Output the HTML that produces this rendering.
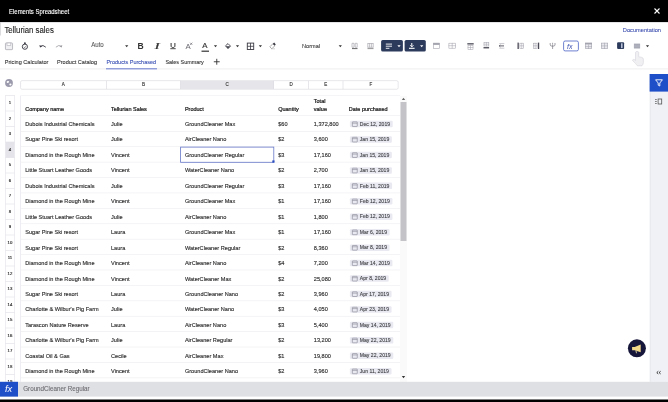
<!DOCTYPE html>
<html><head><meta charset="utf-8"><style>
html,body{margin:0;padding:0;width:668px;height:402px;overflow:hidden;background:#fff}
svg{display:block;will-change:transform}
</style></head><body>
<svg width="668" height="402" viewBox="0 0 668 402" font-family="'Liberation Sans', sans-serif">
<rect x="0.00" y="0.00" width="668.00" height="22.00" fill="#000" />
<text x="9.10" y="13.60" font-size="6.70" fill="#fff" textLength="60.00" lengthAdjust="spacingAndGlyphs" stroke="#fff" stroke-width="0.12">Elements Spreadsheet</text>
<g transform="translate(653.50,7.50)"><path d="M1 1L6 6M6 1L1 6" stroke="#fff" stroke-width="1.1"/></g>
<rect x="0.00" y="22.00" width="668.00" height="0.70" fill="#d8d8dc" />
<rect x="0.00" y="22.00" width="0.90" height="13.50" fill="#d8d8dc" />
<text x="4.40" y="33.20" font-size="8.90" fill="#222" textLength="49.40" lengthAdjust="spacingAndGlyphs" stroke="#222" stroke-width="0.12">Tellurian sales</text>
<text x="622.80" y="31.60" font-size="6.10" fill="#3a4cae" textLength="38.20" lengthAdjust="spacingAndGlyphs" stroke="#3a4cae" stroke-width="0.08">Documentation</text>
<g transform="translate(5.00,42.50)"><rect x="0.45" y="0.45" width="7.1" height="6.7" rx="0.6" fill="#f0f0f3" stroke="#b4b4bc" stroke-width="0.9"/><rect x="2" y="0.5" width="3.8" height="2.4" fill="#fff" stroke="#b0b0b8" stroke-width="0.6"/></g>
<g transform="translate(21.50,42.30)"><circle cx="3.4" cy="4.4" r="2.6" fill="none" stroke="#3a3a44" stroke-width="0.95"/><circle cx="3.4" cy="1.0" r="0.95" fill="#3a3a44"/><path d="M2.3 4.6L3.2 5.4L4.6 3.8" fill="none" stroke="#3a3a44" stroke-width="0.6"/></g>
<g transform="translate(39.20,44.20)"><path d="M1.2 2.0Q3.8 0.2 6.6 3.0" fill="none" stroke="#3a3a44" stroke-width="0.9"/><path d="M0.2 0.8L0.8 3.2L3.0 2.4Z" fill="#3a3a44"/></g>
<g transform="translate(55.50,44.20)"><path d="M5.8 2.0Q3.2 0.2 0.4 3.0" fill="none" stroke="#9a9aa0" stroke-width="0.8"/><path d="M6.8 0.8L6.2 3.2L4.0 2.4Z" fill="#9a9aa0"/></g>
<text x="91.20" y="47.40" font-size="6.60" fill="#555" textLength="12.60" lengthAdjust="spacingAndGlyphs" stroke="#555" stroke-width="0.08">Auto</text>
<g transform="translate(125.10,45.20)"><path d="M0 0H3.2L1.6 2Z" fill="#333"/></g>
<text x="137.60" y="48.80" font-size="8.40" fill="#333" font-weight="bold" textLength="6.20" lengthAdjust="spacingAndGlyphs">B</text>
<text x="154.40" y="48.80" font-size="8.20" fill="#333" textLength="5.20" lengthAdjust="spacingAndGlyphs" font-family="Liberation Serif" font-style="italic" stroke="#333" stroke-width="0.2">I</text>
<g transform="translate(170.00,42.80)"><path d="M1.1 0.2V3.2C1.1 5.2 4.9 5.2 4.9 3.2V0.2" fill="none" stroke="#333" stroke-width="1"/><path d="M0.3 5.9H5.7" stroke="#333" stroke-width="0.9"/></g>
<text x="185.60" y="48.60" font-size="7.60" fill="#6a6a72" textLength="5.20" lengthAdjust="spacingAndGlyphs">A</text>
<g transform="translate(189.80,42.40)"><path d="M0.3 0.3L2.5 2.5M2.5 0.3L0.3 2.5" stroke="#6a6a72" stroke-width="0.7"/></g>
<text x="202.30" y="47.80" font-size="7.40" fill="#333" textLength="5.20" lengthAdjust="spacingAndGlyphs" stroke="#333" stroke-width="0.15">A</text>
<rect x="201.50" y="50.60" width="7.50" height="1.20" fill="#333" />
<g transform="translate(213.90,45.20)"><path d="M0 0H3.2L1.6 2Z" fill="#333"/></g>
<g transform="translate(224.50,42.80)"><path d="M1 3L3.5 0.8L6 3.3L3.5 5.8Z" fill="none" stroke="#3a3a44" stroke-width="0.9"/><path d="M1.5 3.4H5.6L3.5 5.6Z" fill="#3a3a44"/></g>
<g transform="translate(235.90,45.20)"><path d="M0 0H3.2L1.6 2Z" fill="#333"/></g>
<g transform="translate(246.80,42.60)"><rect x="0.5" y="0.5" width="6.4" height="6.4" fill="none" stroke="#3a3a44" stroke-width="0.9"/><path d="M3.7 0.5V6.9M0.5 3.7H6.9" stroke="#3a3a44" stroke-width="0.8"/></g>
<g transform="translate(258.80,45.20)"><path d="M0 0H3.2L1.6 2Z" fill="#333"/></g>
<g transform="translate(269.00,42.80)"><path d="M0.8 4L3.8 1L5.8 3L2.8 6Z" fill="none" stroke="#888" stroke-width="0.7"/><path d="M3.8 1L5.2 -0.2L6.8 1.6L5.5 2.8Z" fill="#3a3a44"/><path d="M2 6H6" stroke="#aaa" stroke-width="0.5"/></g>
<text x="302.00" y="47.50" font-size="6.00" fill="#3a3a3a" textLength="18.00" lengthAdjust="spacingAndGlyphs" stroke="#3a3a3a" stroke-width="0.1">Normal</text>
<g transform="translate(338.70,45.20)"><path d="M0 0H3.2L1.6 2Z" fill="#333"/></g>
<g transform="translate(351.00,42.30)"><path d="M1 1V5M3 1V5M1 1H3M1 5H3M4.2 1H6.2V5H4.2Z" fill="none" stroke="#9a9aa2" stroke-width="0.6"/><path d="M1 6.3H6.5" stroke="#555" stroke-width="0.9"/></g>
<g transform="translate(367.00,42.30)"><path d="M0.8 1.2V5M2.6 1.2V5M4.4 1.2V5M6.2 1.2V5M0.5 1.2H6.5M0.5 5H6.5" fill="none" stroke="#9a9aa2" stroke-width="0.6"/><path d="M0.5 6.3H6.5" stroke="#666" stroke-width="0.7"/></g>
<rect x="381.10" y="40.00" width="21.80" height="11.60" fill="#2c3b5c" rx="1.6"/>
<rect x="404.60" y="40.00" width="21.20" height="11.60" fill="#2c3b5c" rx="1.6"/>
<g transform="translate(385.80,43.60)"><path d="M0 0.5H6.2M0 2.6H6.2M0 4.7H3.6" stroke="#fff" stroke-width="0.9"/></g>
<g transform="translate(397.40,45.20)"><path d="M0 0H3.2L1.6 2Z" fill="#fff"/></g>
<g transform="translate(409.00,43.00)"><path d="M2.8 0V3.6M1.2 2.3L2.8 3.9L4.4 2.3" fill="none" stroke="#fff" stroke-width="1"/><path d="M0 5.3H5.6" stroke="#fff" stroke-width="1.1"/></g>
<g transform="translate(420.10,45.20)"><path d="M0 0H3.2L1.6 2Z" fill="#fff"/></g>
<g transform="translate(433.20,42.90)"><rect x="0.3" y="0.3" width="5.8" height="5.2" fill="none" stroke="#a4a4ae" stroke-width="0.6"/><rect x="0" y="0" width="6.4" height="2" fill="#a4a4ae"/></g>
<g transform="translate(448.60,42.90)"><rect x="0.30" y="0.30" width="6.60" height="5.00" fill="none" stroke="#a4a4ae" stroke-width="0.55"/><path d="M0.00 2.80H7.20M3.60 0.00V5.60" stroke="#a4a4ae" stroke-width="0.55"/></g>
<g transform="translate(467.30,43.20)"><rect x="0" y="0" width="6.4" height="1.3" fill="#4a4a56"/><rect x="0.70" y="2.50" width="5.00" height="3.60" fill="none" stroke="#a4a4ae" stroke-width="0.55"/><path d="M0.40 4.30H6.00M3.20 2.20V6.40" stroke="#a4a4ae" stroke-width="0.55"/></g>
<g transform="translate(483.50,42.10)"><rect x="0.50" y="0.30" width="4.80" height="3.60" fill="none" stroke="#a4a4ae" stroke-width="0.55"/><path d="M0.20 2.10H5.60M2.90 0.00V4.20" stroke="#a4a4ae" stroke-width="0.55"/><rect x="0" y="5" width="5.6" height="1.3" fill="#4a4a56"/></g>
<g transform="translate(498.80,42.60)"><path d="M0.5 1H5.5M0.5 5.6H5.5" stroke="#a4a4ae" stroke-width="0.6"/><path d="M0.3 3.3H5.2" stroke="#4a4a56" stroke-width="0.9"/><path d="M1.6 2.2L0.4 3.3L1.6 4.4" fill="none" stroke="#4a4a56" stroke-width="0.6"/></g>
<g transform="translate(517.50,42.60)"><rect x="0" y="0" width="1.3" height="6.4" fill="#4a4a56"/><rect x="2.40" y="0.60" width="3.70" height="5.20" fill="none" stroke="#a4a4ae" stroke-width="0.55"/><path d="M2.10 3.20H6.40M4.25 0.30V6.10" stroke="#a4a4ae" stroke-width="0.55"/></g>
<g transform="translate(533.00,42.60)"><rect x="0.30" y="0.60" width="3.70" height="5.20" fill="none" stroke="#a4a4ae" stroke-width="0.55"/><path d="M0.00 3.20H4.30M2.15 0.30V6.10" stroke="#a4a4ae" stroke-width="0.55"/><rect x="4.9" y="0" width="1.3" height="6.4" fill="#4a4a56"/></g>
<g transform="translate(549.00,42.40)"><path d="M3.6 2.2V6.6M1.2 0.6V2.6Q1.2 3.8 3.6 3.8Q6 3.8 6 2.6V0.6M3.6 0.4V2" fill="none" stroke="#7a7a84" stroke-width="0.7"/></g>
<rect x="563.60" y="41.00" width="14.80" height="9.90" fill="#fff" rx="1.5" stroke="#4a62c4" stroke-width="0.8"/>
<text x="567.00" y="49.00" font-size="7.00" fill="#3a50b0" font-style="italic">fx</text>
<g transform="translate(585.00,42.80)"><rect x="0.3" y="0.3" width="6.4" height="5.6" fill="#e8e8ee" stroke="#a4a4ae" stroke-width="0.6"/><rect x="0" y="0" width="7" height="1.6" fill="#a4a4ae"/><path d="M0 3.8H7M3.5 1.6V6.2" stroke="#a4a4ae" stroke-width="0.55"/></g>
<g transform="translate(601.00,42.80)"><rect x="0.3" y="0.3" width="6.4" height="5.6" fill="#e8e8ee" stroke="#a4a4ae" stroke-width="0.6"/><path d="M3.5 0V6.2M0 3.1H7" stroke="#a4a4ae" stroke-width="0.55"/></g>
<g transform="translate(617.10,42.30)"><rect x="0" y="0" width="7" height="6.8" rx="1" fill="#2c3b5c"/><rect x="3.9" y="1" width="1.6" height="4.8" fill="#b8c0d8"/></g>
<g transform="translate(633.90,43.60)"><rect x="0" y="0" width="6.2" height="4.9" fill="#a8aab6"/><path d="M0 2.45H6.2" stroke="#c8cad4" stroke-width="0.4"/></g>
<g transform="translate(645.90,45.20)"><path d="M0 0H3.2L1.6 2Z" fill="#333"/></g>
<text x="4.80" y="63.80" font-size="5.70" fill="#333" textLength="43.60" lengthAdjust="spacingAndGlyphs" stroke="#333" stroke-width="0.1">Pricing Calculator</text>
<text x="57.00" y="63.80" font-size="5.70" fill="#333" textLength="40.00" lengthAdjust="spacingAndGlyphs" stroke="#333" stroke-width="0.1">Product Catalog</text>
<text x="106.40" y="63.80" font-size="5.70" fill="#3a50b4" textLength="49.80" lengthAdjust="spacingAndGlyphs" stroke="#3a50b4" stroke-width="0.1">Products Purchased</text>
<text x="165.40" y="63.80" font-size="5.70" fill="#333" textLength="38.40" lengthAdjust="spacingAndGlyphs" stroke="#333" stroke-width="0.1">Sales Summary</text>
<g transform="translate(213.50,58.50)"><path d="M3.25 0.3V6.2M0.3 3.25H6.2" stroke="#333" stroke-width="0.9"/></g>
<rect x="106.00" y="68.00" width="51.00" height="1.40" fill="#5a6fd0" />
<rect x="0.00" y="68.60" width="668.00" height="0.70" fill="#e6e6e9" />
<g transform="translate(5.00,79.00)"><circle cx="4" cy="4" r="3.9" fill="#9a9aac"/><ellipse cx="2.9" cy="2.9" rx="1.3" ry="0.9" fill="#fff" transform="rotate(-20 2.9 2.9)"/><ellipse cx="5.4" cy="5.4" rx="1.1" ry="1.0" fill="#fff"/></g>
<rect x="20.55" y="80.65" width="377.60" height="8.60" fill="#fff" rx="1.5" stroke="#dcdce2" stroke-width="0.7"/>
<rect x="180.40" y="80.90" width="93.50" height="8.10" fill="#e6e6ea" />
<rect x="106.05" y="80.80" width="0.70" height="8.30" fill="#dcdce2" />
<rect x="180.05" y="80.80" width="0.70" height="8.30" fill="#dcdce2" />
<rect x="273.25" y="80.80" width="0.70" height="8.30" fill="#dcdce2" />
<rect x="308.25" y="80.80" width="0.70" height="8.30" fill="#dcdce2" />
<rect x="342.65" y="80.80" width="0.70" height="8.30" fill="#dcdce2" />
<text x="63.30" y="86.30" font-size="4.50" fill="#333" text-anchor="middle" stroke="#333" stroke-width="0.14">A</text>
<text x="143.40" y="86.30" font-size="4.50" fill="#333" text-anchor="middle" stroke="#333" stroke-width="0.14">B</text>
<text x="227.00" y="86.30" font-size="4.50" fill="#333" text-anchor="middle" stroke="#333" stroke-width="0.14">C</text>
<text x="291.10" y="86.30" font-size="4.50" fill="#333" text-anchor="middle" stroke="#333" stroke-width="0.14">D</text>
<text x="325.80" y="86.30" font-size="4.50" fill="#333" text-anchor="middle" stroke="#333" stroke-width="0.14">E</text>
<text x="370.75" y="86.30" font-size="4.50" fill="#333" text-anchor="middle" stroke="#333" stroke-width="0.14">F</text>
<text x="10.00" y="104.30" font-size="4.30" fill="#2a2a2a" text-anchor="middle" stroke="#2a2a2a" stroke-width="0.16">1</text>
<text x="10.00" y="119.80" font-size="4.30" fill="#2a2a2a" text-anchor="middle" stroke="#2a2a2a" stroke-width="0.16">2</text>
<text x="10.00" y="135.30" font-size="4.30" fill="#2a2a2a" text-anchor="middle" stroke="#2a2a2a" stroke-width="0.16">3</text>
<rect x="5.40" y="142.00" width="9.20" height="15.50" fill="#e4e4ea" />
<text x="10.00" y="150.80" font-size="4.30" fill="#2a2a2a" text-anchor="middle" stroke="#2a2a2a" stroke-width="0.16">4</text>
<text x="10.00" y="166.30" font-size="4.30" fill="#2a2a2a" text-anchor="middle" stroke="#2a2a2a" stroke-width="0.16">5</text>
<text x="10.00" y="181.80" font-size="4.30" fill="#2a2a2a" text-anchor="middle" stroke="#2a2a2a" stroke-width="0.16">6</text>
<text x="10.00" y="197.30" font-size="4.30" fill="#2a2a2a" text-anchor="middle" stroke="#2a2a2a" stroke-width="0.16">7</text>
<text x="10.00" y="212.80" font-size="4.30" fill="#2a2a2a" text-anchor="middle" stroke="#2a2a2a" stroke-width="0.16">8</text>
<text x="10.00" y="228.30" font-size="4.30" fill="#2a2a2a" text-anchor="middle" stroke="#2a2a2a" stroke-width="0.16">9</text>
<text x="10.00" y="243.80" font-size="4.30" fill="#2a2a2a" text-anchor="middle" stroke="#2a2a2a" stroke-width="0.16">10</text>
<text x="10.00" y="259.30" font-size="4.30" fill="#2a2a2a" text-anchor="middle" stroke="#2a2a2a" stroke-width="0.16">11</text>
<text x="10.00" y="274.80" font-size="4.30" fill="#2a2a2a" text-anchor="middle" stroke="#2a2a2a" stroke-width="0.16">12</text>
<text x="10.00" y="290.30" font-size="4.30" fill="#2a2a2a" text-anchor="middle" stroke="#2a2a2a" stroke-width="0.16">13</text>
<text x="10.00" y="305.80" font-size="4.30" fill="#2a2a2a" text-anchor="middle" stroke="#2a2a2a" stroke-width="0.16">14</text>
<text x="10.00" y="321.30" font-size="4.30" fill="#2a2a2a" text-anchor="middle" stroke="#2a2a2a" stroke-width="0.16">15</text>
<text x="10.00" y="336.80" font-size="4.30" fill="#2a2a2a" text-anchor="middle" stroke="#2a2a2a" stroke-width="0.16">16</text>
<text x="10.00" y="352.30" font-size="4.30" fill="#2a2a2a" text-anchor="middle" stroke="#2a2a2a" stroke-width="0.16">17</text>
<text x="10.00" y="367.80" font-size="4.30" fill="#2a2a2a" text-anchor="middle" stroke="#2a2a2a" stroke-width="0.16">18</text>
<text x="10.00" y="383.30" font-size="4.30" fill="#2a2a2a" text-anchor="middle" stroke="#2a2a2a" stroke-width="0.16">19</text>
<rect x="5.20" y="95.20" width="0.70" height="286.60" fill="#e6e6ec" />
<rect x="14.30" y="95.20" width="0.70" height="286.60" fill="#e6e6ec" />
<rect x="5.40" y="95.20" width="9.20" height="0.60" fill="#e0e0e6" />
<rect x="5.40" y="110.70" width="9.20" height="0.60" fill="#e0e0e6" />
<rect x="5.40" y="126.20" width="9.20" height="0.60" fill="#e0e0e6" />
<rect x="5.40" y="141.70" width="9.20" height="0.60" fill="#e0e0e6" />
<rect x="5.40" y="157.20" width="9.20" height="0.60" fill="#e0e0e6" />
<rect x="5.40" y="172.70" width="9.20" height="0.60" fill="#e0e0e6" />
<rect x="5.40" y="188.20" width="9.20" height="0.60" fill="#e0e0e6" />
<rect x="5.40" y="203.70" width="9.20" height="0.60" fill="#e0e0e6" />
<rect x="5.40" y="219.20" width="9.20" height="0.60" fill="#e0e0e6" />
<rect x="5.40" y="234.70" width="9.20" height="0.60" fill="#e0e0e6" />
<rect x="5.40" y="250.20" width="9.20" height="0.60" fill="#e0e0e6" />
<rect x="5.40" y="265.70" width="9.20" height="0.60" fill="#e0e0e6" />
<rect x="5.40" y="281.20" width="9.20" height="0.60" fill="#e0e0e6" />
<rect x="5.40" y="296.70" width="9.20" height="0.60" fill="#e0e0e6" />
<rect x="5.40" y="312.20" width="9.20" height="0.60" fill="#e0e0e6" />
<rect x="5.40" y="327.70" width="9.20" height="0.60" fill="#e0e0e6" />
<rect x="5.40" y="343.20" width="9.20" height="0.60" fill="#e0e0e6" />
<rect x="5.40" y="358.70" width="9.20" height="0.60" fill="#e0e0e6" />
<rect x="5.40" y="374.20" width="9.20" height="0.60" fill="#e0e0e6" />
<rect x="20.00" y="96.00" width="0.70" height="285.80" fill="#e6e6ee" />
<rect x="20.20" y="95.40" width="379.80" height="0.60" fill="#eeeef2" />
<text x="25.20" y="111.10" font-size="5.50" fill="#1e1e1e" stroke="#1e1e1e" stroke-width="0.24">Company name</text>
<text x="111.00" y="111.10" font-size="5.50" fill="#1e1e1e" stroke="#1e1e1e" stroke-width="0.24">Tellurian Sales</text>
<text x="184.90" y="111.10" font-size="5.50" fill="#1e1e1e" stroke="#1e1e1e" stroke-width="0.24">Product</text>
<text x="278.20" y="111.10" font-size="5.50" fill="#1e1e1e" stroke="#1e1e1e" stroke-width="0.24">Quantity</text>
<text x="348.80" y="111.10" font-size="5.50" fill="#1e1e1e" stroke="#1e1e1e" stroke-width="0.24">Date purchased</text>
<text x="313.80" y="103.00" font-size="5.50" fill="#1e1e1e" stroke="#1e1e1e" stroke-width="0.24">Total</text>
<text x="313.80" y="110.90" font-size="5.50" fill="#1e1e1e" stroke="#1e1e1e" stroke-width="0.24">value</text>
<rect x="20.70" y="115.10" width="379.30" height="0.60" fill="#ececf0" />
<rect x="20.70" y="131.00" width="379.30" height="0.60" fill="#ececf0" />
<rect x="20.70" y="146.41" width="379.30" height="0.60" fill="#ececf0" />
<rect x="20.70" y="161.82" width="379.30" height="0.60" fill="#ececf0" />
<rect x="20.70" y="177.23" width="379.30" height="0.60" fill="#ececf0" />
<rect x="20.70" y="192.64" width="379.30" height="0.60" fill="#ececf0" />
<rect x="20.70" y="208.05" width="379.30" height="0.60" fill="#ececf0" />
<rect x="20.70" y="223.46" width="379.30" height="0.60" fill="#ececf0" />
<rect x="20.70" y="238.87" width="379.30" height="0.60" fill="#ececf0" />
<rect x="20.70" y="254.28" width="379.30" height="0.60" fill="#ececf0" />
<rect x="20.70" y="269.69" width="379.30" height="0.60" fill="#ececf0" />
<rect x="20.70" y="285.10" width="379.30" height="0.60" fill="#ececf0" />
<rect x="20.70" y="300.51" width="379.30" height="0.60" fill="#ececf0" />
<rect x="20.70" y="315.92" width="379.30" height="0.60" fill="#ececf0" />
<rect x="20.70" y="331.33" width="379.30" height="0.60" fill="#ececf0" />
<rect x="20.70" y="346.74" width="379.30" height="0.60" fill="#ececf0" />
<rect x="20.70" y="362.15" width="379.30" height="0.60" fill="#ececf0" />
<rect x="20.70" y="377.56" width="379.30" height="0.60" fill="#ececf0" />
<text x="25.20" y="126.00" font-size="5.60" fill="#2e2e2e" stroke="#2e2e2e" stroke-width="0.14">Dubois Industrial Chemicals</text>
<text x="111.00" y="126.00" font-size="5.60" fill="#2e2e2e" stroke="#2e2e2e" stroke-width="0.14">Julie</text>
<text x="184.90" y="126.00" font-size="5.60" fill="#2e2e2e" stroke="#2e2e2e" stroke-width="0.14">GroundCleaner Max</text>
<text x="278.20" y="126.00" font-size="5.60" fill="#2e2e2e" stroke="#2e2e2e" stroke-width="0.14">$60</text>
<text x="313.80" y="126.00" font-size="5.60" fill="#2e2e2e" stroke="#2e2e2e" stroke-width="0.14">1,372,800</text>
<rect x="349.90" y="120.80" width="42.81" height="6.50" fill="#e9e9f1" rx="1.2"/>
<g transform="translate(351.90,121.30)"><rect x="0.45" y="0.55" width="4.9" height="4.7" rx="0.4" fill="none" stroke="#808090" stroke-width="0.6"/><path d="M0.45 1.9H5.35" stroke="#808090" stroke-width="0.55"/></g>
<text x="359.80" y="125.70" font-size="5.10" fill="#3e3e44" stroke="#3e3e44" stroke-width="0.1">Dec 12, 2019</text>
<text x="25.20" y="141.45" font-size="5.60" fill="#2e2e2e" stroke="#2e2e2e" stroke-width="0.14">Sugar Pine Ski resort</text>
<text x="111.00" y="141.45" font-size="5.60" fill="#2e2e2e" stroke="#2e2e2e" stroke-width="0.14">Julie</text>
<text x="184.90" y="141.45" font-size="5.60" fill="#2e2e2e" stroke="#2e2e2e" stroke-width="0.14">AirCleaner Nano</text>
<text x="278.20" y="141.45" font-size="5.60" fill="#2e2e2e" stroke="#2e2e2e" stroke-width="0.14">$2</text>
<text x="313.80" y="141.45" font-size="5.60" fill="#2e2e2e" stroke="#2e2e2e" stroke-width="0.14">3,600</text>
<rect x="349.90" y="136.25" width="41.97" height="6.50" fill="#e9e9f1" rx="1.2"/>
<g transform="translate(351.90,136.75)"><rect x="0.45" y="0.55" width="4.9" height="4.7" rx="0.4" fill="none" stroke="#808090" stroke-width="0.6"/><path d="M0.45 1.9H5.35" stroke="#808090" stroke-width="0.55"/></g>
<text x="359.80" y="141.15" font-size="5.10" fill="#3e3e44" stroke="#3e3e44" stroke-width="0.1">Jan 15, 2019</text>
<text x="25.20" y="156.90" font-size="5.60" fill="#2e2e2e" stroke="#2e2e2e" stroke-width="0.14">Diamond in the Rough Mine</text>
<text x="111.00" y="156.90" font-size="5.60" fill="#2e2e2e" stroke="#2e2e2e" stroke-width="0.14">Vincent</text>
<text x="184.90" y="156.90" font-size="5.60" fill="#2e2e2e" stroke="#2e2e2e" stroke-width="0.14">GroundCleaner Regular</text>
<text x="278.20" y="156.90" font-size="5.60" fill="#2e2e2e" stroke="#2e2e2e" stroke-width="0.14">$3</text>
<text x="313.80" y="156.90" font-size="5.60" fill="#2e2e2e" stroke="#2e2e2e" stroke-width="0.14">17,160</text>
<rect x="349.90" y="151.70" width="41.97" height="6.50" fill="#e9e9f1" rx="1.2"/>
<g transform="translate(351.90,152.20)"><rect x="0.45" y="0.55" width="4.9" height="4.7" rx="0.4" fill="none" stroke="#808090" stroke-width="0.6"/><path d="M0.45 1.9H5.35" stroke="#808090" stroke-width="0.55"/></g>
<text x="359.80" y="156.60" font-size="5.10" fill="#3e3e44" stroke="#3e3e44" stroke-width="0.1">Jan 15, 2019</text>
<text x="25.20" y="172.35" font-size="5.60" fill="#2e2e2e" stroke="#2e2e2e" stroke-width="0.14">Little Stuart Leather Goods</text>
<text x="111.00" y="172.35" font-size="5.60" fill="#2e2e2e" stroke="#2e2e2e" stroke-width="0.14">Vincent</text>
<text x="184.90" y="172.35" font-size="5.60" fill="#2e2e2e" stroke="#2e2e2e" stroke-width="0.14">WaterCleaner Nano</text>
<text x="278.20" y="172.35" font-size="5.60" fill="#2e2e2e" stroke="#2e2e2e" stroke-width="0.14">$2</text>
<text x="313.80" y="172.35" font-size="5.60" fill="#2e2e2e" stroke="#2e2e2e" stroke-width="0.14">2,700</text>
<rect x="349.90" y="167.15" width="41.97" height="6.50" fill="#e9e9f1" rx="1.2"/>
<g transform="translate(351.90,167.65)"><rect x="0.45" y="0.55" width="4.9" height="4.7" rx="0.4" fill="none" stroke="#808090" stroke-width="0.6"/><path d="M0.45 1.9H5.35" stroke="#808090" stroke-width="0.55"/></g>
<text x="359.80" y="172.05" font-size="5.10" fill="#3e3e44" stroke="#3e3e44" stroke-width="0.1">Jan 15, 2019</text>
<text x="25.20" y="187.80" font-size="5.60" fill="#2e2e2e" stroke="#2e2e2e" stroke-width="0.14">Dubois Industrial Chemicals</text>
<text x="111.00" y="187.80" font-size="5.60" fill="#2e2e2e" stroke="#2e2e2e" stroke-width="0.14">Julie</text>
<text x="184.90" y="187.80" font-size="5.60" fill="#2e2e2e" stroke="#2e2e2e" stroke-width="0.14">GroundCleaner Regular</text>
<text x="278.20" y="187.80" font-size="5.60" fill="#2e2e2e" stroke="#2e2e2e" stroke-width="0.14">$3</text>
<text x="313.80" y="187.80" font-size="5.60" fill="#2e2e2e" stroke="#2e2e2e" stroke-width="0.14">17,160</text>
<rect x="349.90" y="182.60" width="42.16" height="6.50" fill="#e9e9f1" rx="1.2"/>
<g transform="translate(351.90,183.10)"><rect x="0.45" y="0.55" width="4.9" height="4.7" rx="0.4" fill="none" stroke="#808090" stroke-width="0.6"/><path d="M0.45 1.9H5.35" stroke="#808090" stroke-width="0.55"/></g>
<text x="359.80" y="187.50" font-size="5.10" fill="#3e3e44" stroke="#3e3e44" stroke-width="0.1">Feb 11, 2019</text>
<text x="25.20" y="203.25" font-size="5.60" fill="#2e2e2e" stroke="#2e2e2e" stroke-width="0.14">Diamond in the Rough Mine</text>
<text x="111.00" y="203.25" font-size="5.60" fill="#2e2e2e" stroke="#2e2e2e" stroke-width="0.14">Vincent</text>
<text x="184.90" y="203.25" font-size="5.60" fill="#2e2e2e" stroke="#2e2e2e" stroke-width="0.14">GroundCleaner Max</text>
<text x="278.20" y="203.25" font-size="5.60" fill="#2e2e2e" stroke="#2e2e2e" stroke-width="0.14">$1</text>
<text x="313.80" y="203.25" font-size="5.60" fill="#2e2e2e" stroke="#2e2e2e" stroke-width="0.14">17,160</text>
<rect x="349.90" y="198.05" width="42.53" height="6.50" fill="#e9e9f1" rx="1.2"/>
<g transform="translate(351.90,198.55)"><rect x="0.45" y="0.55" width="4.9" height="4.7" rx="0.4" fill="none" stroke="#808090" stroke-width="0.6"/><path d="M0.45 1.9H5.35" stroke="#808090" stroke-width="0.55"/></g>
<text x="359.80" y="202.95" font-size="5.10" fill="#3e3e44" stroke="#3e3e44" stroke-width="0.1">Feb 12, 2019</text>
<text x="25.20" y="218.70" font-size="5.60" fill="#2e2e2e" stroke="#2e2e2e" stroke-width="0.14">Little Stuart Leather Goods</text>
<text x="111.00" y="218.70" font-size="5.60" fill="#2e2e2e" stroke="#2e2e2e" stroke-width="0.14">Julie</text>
<text x="184.90" y="218.70" font-size="5.60" fill="#2e2e2e" stroke="#2e2e2e" stroke-width="0.14">AirCleaner Nano</text>
<text x="278.20" y="218.70" font-size="5.60" fill="#2e2e2e" stroke="#2e2e2e" stroke-width="0.14">$1</text>
<text x="313.80" y="218.70" font-size="5.60" fill="#2e2e2e" stroke="#2e2e2e" stroke-width="0.14">1,800</text>
<rect x="349.90" y="213.50" width="42.53" height="6.50" fill="#e9e9f1" rx="1.2"/>
<g transform="translate(351.90,214.00)"><rect x="0.45" y="0.55" width="4.9" height="4.7" rx="0.4" fill="none" stroke="#808090" stroke-width="0.6"/><path d="M0.45 1.9H5.35" stroke="#808090" stroke-width="0.55"/></g>
<text x="359.80" y="218.40" font-size="5.10" fill="#3e3e44" stroke="#3e3e44" stroke-width="0.1">Feb 12, 2019</text>
<text x="25.20" y="234.15" font-size="5.60" fill="#2e2e2e" stroke="#2e2e2e" stroke-width="0.14">Sugar Pine Ski resort</text>
<text x="111.00" y="234.15" font-size="5.60" fill="#2e2e2e" stroke="#2e2e2e" stroke-width="0.14">Laura</text>
<text x="184.90" y="234.15" font-size="5.60" fill="#2e2e2e" stroke="#2e2e2e" stroke-width="0.14">GroundCleaner Max</text>
<text x="278.20" y="234.15" font-size="5.60" fill="#2e2e2e" stroke="#2e2e2e" stroke-width="0.14">$1</text>
<text x="313.80" y="234.15" font-size="5.60" fill="#2e2e2e" stroke="#2e2e2e" stroke-width="0.14">17,160</text>
<rect x="349.90" y="228.95" width="39.69" height="6.50" fill="#e9e9f1" rx="1.2"/>
<g transform="translate(351.90,229.45)"><rect x="0.45" y="0.55" width="4.9" height="4.7" rx="0.4" fill="none" stroke="#808090" stroke-width="0.6"/><path d="M0.45 1.9H5.35" stroke="#808090" stroke-width="0.55"/></g>
<text x="359.80" y="233.85" font-size="5.10" fill="#3e3e44" stroke="#3e3e44" stroke-width="0.1">Mar 6, 2019</text>
<text x="25.20" y="249.60" font-size="5.60" fill="#2e2e2e" stroke="#2e2e2e" stroke-width="0.14">Sugar Pine Ski resort</text>
<text x="111.00" y="249.60" font-size="5.60" fill="#2e2e2e" stroke="#2e2e2e" stroke-width="0.14">Laura</text>
<text x="184.90" y="249.60" font-size="5.60" fill="#2e2e2e" stroke="#2e2e2e" stroke-width="0.14">WaterCleaner Regular</text>
<text x="278.20" y="249.60" font-size="5.60" fill="#2e2e2e" stroke="#2e2e2e" stroke-width="0.14">$2</text>
<text x="313.80" y="249.60" font-size="5.60" fill="#2e2e2e" stroke="#2e2e2e" stroke-width="0.14">8,360</text>
<rect x="349.90" y="244.40" width="39.69" height="6.50" fill="#e9e9f1" rx="1.2"/>
<g transform="translate(351.90,244.90)"><rect x="0.45" y="0.55" width="4.9" height="4.7" rx="0.4" fill="none" stroke="#808090" stroke-width="0.6"/><path d="M0.45 1.9H5.35" stroke="#808090" stroke-width="0.55"/></g>
<text x="359.80" y="249.30" font-size="5.10" fill="#3e3e44" stroke="#3e3e44" stroke-width="0.1">Mar 8, 2019</text>
<text x="25.20" y="265.05" font-size="5.60" fill="#2e2e2e" stroke="#2e2e2e" stroke-width="0.14">Diamond in the Rough Mine</text>
<text x="111.00" y="265.05" font-size="5.60" fill="#2e2e2e" stroke="#2e2e2e" stroke-width="0.14">Vincent</text>
<text x="184.90" y="265.05" font-size="5.60" fill="#2e2e2e" stroke="#2e2e2e" stroke-width="0.14">AirCleaner Nano</text>
<text x="278.20" y="265.05" font-size="5.60" fill="#2e2e2e" stroke="#2e2e2e" stroke-width="0.14">$4</text>
<text x="313.80" y="265.05" font-size="5.60" fill="#2e2e2e" stroke="#2e2e2e" stroke-width="0.14">7,200</text>
<rect x="349.90" y="259.85" width="42.52" height="6.50" fill="#e9e9f1" rx="1.2"/>
<g transform="translate(351.90,260.35)"><rect x="0.45" y="0.55" width="4.9" height="4.7" rx="0.4" fill="none" stroke="#808090" stroke-width="0.6"/><path d="M0.45 1.9H5.35" stroke="#808090" stroke-width="0.55"/></g>
<text x="359.80" y="264.75" font-size="5.10" fill="#3e3e44" stroke="#3e3e44" stroke-width="0.1">Mar 14, 2019</text>
<text x="25.20" y="280.50" font-size="5.60" fill="#2e2e2e" stroke="#2e2e2e" stroke-width="0.14">Diamond in the Rough Mine</text>
<text x="111.00" y="280.50" font-size="5.60" fill="#2e2e2e" stroke="#2e2e2e" stroke-width="0.14">Vincent</text>
<text x="184.90" y="280.50" font-size="5.60" fill="#2e2e2e" stroke="#2e2e2e" stroke-width="0.14">WaterCleaner Max</text>
<text x="278.20" y="280.50" font-size="5.60" fill="#2e2e2e" stroke="#2e2e2e" stroke-width="0.14">$2</text>
<text x="313.80" y="280.50" font-size="5.60" fill="#2e2e2e" stroke="#2e2e2e" stroke-width="0.14">25,080</text>
<rect x="349.90" y="275.30" width="38.84" height="6.50" fill="#e9e9f1" rx="1.2"/>
<g transform="translate(351.90,275.80)"><rect x="0.45" y="0.55" width="4.9" height="4.7" rx="0.4" fill="none" stroke="#808090" stroke-width="0.6"/><path d="M0.45 1.9H5.35" stroke="#808090" stroke-width="0.55"/></g>
<text x="359.80" y="280.20" font-size="5.10" fill="#3e3e44" stroke="#3e3e44" stroke-width="0.1">Apr 8, 2019</text>
<text x="25.20" y="295.95" font-size="5.60" fill="#2e2e2e" stroke="#2e2e2e" stroke-width="0.14">Sugar Pine Ski resort</text>
<text x="111.00" y="295.95" font-size="5.60" fill="#2e2e2e" stroke="#2e2e2e" stroke-width="0.14">Laura</text>
<text x="184.90" y="295.95" font-size="5.60" fill="#2e2e2e" stroke="#2e2e2e" stroke-width="0.14">GroundCleaner Nano</text>
<text x="278.20" y="295.95" font-size="5.60" fill="#2e2e2e" stroke="#2e2e2e" stroke-width="0.14">$2</text>
<text x="313.80" y="295.95" font-size="5.60" fill="#2e2e2e" stroke="#2e2e2e" stroke-width="0.14">3,960</text>
<rect x="349.90" y="290.75" width="41.67" height="6.50" fill="#e9e9f1" rx="1.2"/>
<g transform="translate(351.90,291.25)"><rect x="0.45" y="0.55" width="4.9" height="4.7" rx="0.4" fill="none" stroke="#808090" stroke-width="0.6"/><path d="M0.45 1.9H5.35" stroke="#808090" stroke-width="0.55"/></g>
<text x="359.80" y="295.65" font-size="5.10" fill="#3e3e44" stroke="#3e3e44" stroke-width="0.1">Apr 17, 2019</text>
<text x="25.20" y="311.40" font-size="5.60" fill="#2e2e2e" stroke="#2e2e2e" stroke-width="0.14">Charlotte &amp; Wilbur's Pig Farm</text>
<text x="111.00" y="311.40" font-size="5.60" fill="#2e2e2e" stroke="#2e2e2e" stroke-width="0.14">Julie</text>
<text x="184.90" y="311.40" font-size="5.60" fill="#2e2e2e" stroke="#2e2e2e" stroke-width="0.14">WaterCleaner Nano</text>
<text x="278.20" y="311.40" font-size="5.60" fill="#2e2e2e" stroke="#2e2e2e" stroke-width="0.14">$3</text>
<text x="313.80" y="311.40" font-size="5.60" fill="#2e2e2e" stroke="#2e2e2e" stroke-width="0.14">4,050</text>
<rect x="349.90" y="306.20" width="41.67" height="6.50" fill="#e9e9f1" rx="1.2"/>
<g transform="translate(351.90,306.70)"><rect x="0.45" y="0.55" width="4.9" height="4.7" rx="0.4" fill="none" stroke="#808090" stroke-width="0.6"/><path d="M0.45 1.9H5.35" stroke="#808090" stroke-width="0.55"/></g>
<text x="359.80" y="311.10" font-size="5.10" fill="#3e3e44" stroke="#3e3e44" stroke-width="0.1">Apr 23, 2019</text>
<text x="25.20" y="326.85" font-size="5.60" fill="#2e2e2e" stroke="#2e2e2e" stroke-width="0.14">Tarascon Nature Reserve</text>
<text x="111.00" y="326.85" font-size="5.60" fill="#2e2e2e" stroke="#2e2e2e" stroke-width="0.14">Laura</text>
<text x="184.90" y="326.85" font-size="5.60" fill="#2e2e2e" stroke="#2e2e2e" stroke-width="0.14">AirCleaner Nano</text>
<text x="278.20" y="326.85" font-size="5.60" fill="#2e2e2e" stroke="#2e2e2e" stroke-width="0.14">$3</text>
<text x="313.80" y="326.85" font-size="5.60" fill="#2e2e2e" stroke="#2e2e2e" stroke-width="0.14">5,400</text>
<rect x="349.90" y="321.65" width="43.38" height="6.50" fill="#e9e9f1" rx="1.2"/>
<g transform="translate(351.90,322.15)"><rect x="0.45" y="0.55" width="4.9" height="4.7" rx="0.4" fill="none" stroke="#808090" stroke-width="0.6"/><path d="M0.45 1.9H5.35" stroke="#808090" stroke-width="0.55"/></g>
<text x="359.80" y="326.55" font-size="5.10" fill="#3e3e44" stroke="#3e3e44" stroke-width="0.1">May 14, 2019</text>
<text x="25.20" y="342.30" font-size="5.60" fill="#2e2e2e" stroke="#2e2e2e" stroke-width="0.14">Charlotte &amp; Wilbur's Pig Farm</text>
<text x="111.00" y="342.30" font-size="5.60" fill="#2e2e2e" stroke="#2e2e2e" stroke-width="0.14">Julie</text>
<text x="184.90" y="342.30" font-size="5.60" fill="#2e2e2e" stroke="#2e2e2e" stroke-width="0.14">AirCleaner Regular</text>
<text x="278.20" y="342.30" font-size="5.60" fill="#2e2e2e" stroke="#2e2e2e" stroke-width="0.14">$2</text>
<text x="313.80" y="342.30" font-size="5.60" fill="#2e2e2e" stroke="#2e2e2e" stroke-width="0.14">13,200</text>
<rect x="349.90" y="337.10" width="43.38" height="6.50" fill="#e9e9f1" rx="1.2"/>
<g transform="translate(351.90,337.60)"><rect x="0.45" y="0.55" width="4.9" height="4.7" rx="0.4" fill="none" stroke="#808090" stroke-width="0.6"/><path d="M0.45 1.9H5.35" stroke="#808090" stroke-width="0.55"/></g>
<text x="359.80" y="342.00" font-size="5.10" fill="#3e3e44" stroke="#3e3e44" stroke-width="0.1">May 22, 2019</text>
<text x="25.20" y="357.75" font-size="5.60" fill="#2e2e2e" stroke="#2e2e2e" stroke-width="0.14">Coastal Oil &amp; Gas</text>
<text x="111.00" y="357.75" font-size="5.60" fill="#2e2e2e" stroke="#2e2e2e" stroke-width="0.14">Cecile</text>
<text x="184.90" y="357.75" font-size="5.60" fill="#2e2e2e" stroke="#2e2e2e" stroke-width="0.14">AirCleaner Max</text>
<text x="278.20" y="357.75" font-size="5.60" fill="#2e2e2e" stroke="#2e2e2e" stroke-width="0.14">$1</text>
<text x="313.80" y="357.75" font-size="5.60" fill="#2e2e2e" stroke="#2e2e2e" stroke-width="0.14">19,800</text>
<rect x="349.90" y="352.55" width="43.38" height="6.50" fill="#e9e9f1" rx="1.2"/>
<g transform="translate(351.90,353.05)"><rect x="0.45" y="0.55" width="4.9" height="4.7" rx="0.4" fill="none" stroke="#808090" stroke-width="0.6"/><path d="M0.45 1.9H5.35" stroke="#808090" stroke-width="0.55"/></g>
<text x="359.80" y="357.45" font-size="5.10" fill="#3e3e44" stroke="#3e3e44" stroke-width="0.1">May 22, 2019</text>
<text x="25.20" y="373.20" font-size="5.60" fill="#2e2e2e" stroke="#2e2e2e" stroke-width="0.14">Diamond in the Rough Mine</text>
<text x="111.00" y="373.20" font-size="5.60" fill="#2e2e2e" stroke="#2e2e2e" stroke-width="0.14">Vincent</text>
<text x="184.90" y="373.20" font-size="5.60" fill="#2e2e2e" stroke="#2e2e2e" stroke-width="0.14">GroundCleaner Nano</text>
<text x="278.20" y="373.20" font-size="5.60" fill="#2e2e2e" stroke="#2e2e2e" stroke-width="0.14">$2</text>
<text x="313.80" y="373.20" font-size="5.60" fill="#2e2e2e" stroke="#2e2e2e" stroke-width="0.14">3,960</text>
<rect x="349.90" y="368.00" width="41.58" height="6.50" fill="#e9e9f1" rx="1.2"/>
<g transform="translate(351.90,368.50)"><rect x="0.45" y="0.55" width="4.9" height="4.7" rx="0.4" fill="none" stroke="#808090" stroke-width="0.6"/><path d="M0.45 1.9H5.35" stroke="#808090" stroke-width="0.55"/></g>
<text x="359.80" y="372.90" font-size="5.10" fill="#3e3e44" stroke="#3e3e44" stroke-width="0.1">Jun 11, 2019</text>
<rect x="180.60" y="147.10" width="93.20" height="15.20" fill="none" stroke="#6677c8" stroke-width="0.8"/>
<rect x="272.30" y="160.40" width="2.20" height="2.20" fill="#2a4ec0" />
<rect x="400.00" y="96.00" width="7.00" height="285.80" fill="#fafafb" />
<rect x="400.50" y="102.00" width="6.00" height="139.00" fill="#c4c4c8" />
<g transform="translate(401.80,97.80)"><path d="M0 2.2H3.4L1.7 0Z" fill="#666"/></g>
<g transform="translate(401.80,376.00)"><path d="M0 0H3.4L1.7 2.2Z" fill="#333"/></g>
<rect x="649.80" y="74.00" width="18.20" height="307.80" fill="#eff1f6" />
<rect x="649.80" y="74.00" width="0.70" height="307.80" fill="#e2e3ea" />
<rect x="649.60" y="74.00" width="18.40" height="17.60" fill="#1f4fc8" />
<g transform="translate(655.00,79.20)"><path d="M0.6 0.6H7.4L4.8 3.8V6.8L3.2 6V3.8Z" fill="none" stroke="#fff" stroke-width="0.9" stroke-linejoin="round"/></g>
<g transform="translate(654.50,98.50)"><path d="M0.5 1H2.3M0.5 3H2.3M0.5 5H2.3" stroke="#555" stroke-width="0.7"/><rect x="3.6" y="0.5" width="3.6" height="5" fill="none" stroke="#555" stroke-width="0.8"/></g>
<g transform="translate(656.20,370.90)"><path d="M2.1 0.4L0.6 1.7L2.1 3M4.4 0.4L2.9 1.7L4.4 3" fill="none" stroke="#2a2a2a" stroke-width="0.95"/></g>
<g transform="translate(627.90,339.30)"><circle cx="9" cy="9" r="9" fill="#15163a"/><path d="M4.2 7.6H6.8L12.8 5.2V13L6.8 11H4.2Z" fill="#f2d98a"/><path d="M7.2 11L8.2 14H9.2L8.6 11.2" fill="#b8b090"/></g>
<rect x="0.00" y="381.80" width="668.00" height="14.80" fill="#dfe0e4" />
<rect x="0.00" y="381.80" width="18.00" height="14.80" fill="#1f4fc8" />
<text x="5.00" y="392.40" font-size="8.60" fill="#fff" textLength="7.20" lengthAdjust="spacingAndGlyphs" font-style="italic">fx</text>
<text x="23.20" y="391.20" font-size="6.70" fill="#6c6c70" textLength="66.50" lengthAdjust="spacingAndGlyphs" stroke="#6c6c70" stroke-width="0.1">GroundCleaner Regular</text>
<rect x="0.00" y="399.50" width="668.00" height="2.50" fill="#000" />
<g transform="translate(632.20,51.20)"><path d="M3.3 1.2Q3.3 0.3 4.9 0.3Q6.5 0.3 6.5 1.2V5.6L9.6 6.2Q11.2 6.6 11.2 8V11Q11.2 13 9.8 14.6H5.2L3.6 12.6L0.6 9.6Q0 8.6 1 8.2Q1.8 8 3.3 9.2Z" fill="#f0f0f3" stroke="#cdcdd6" stroke-width="0.5"/></g>
</svg>
</body></html>
